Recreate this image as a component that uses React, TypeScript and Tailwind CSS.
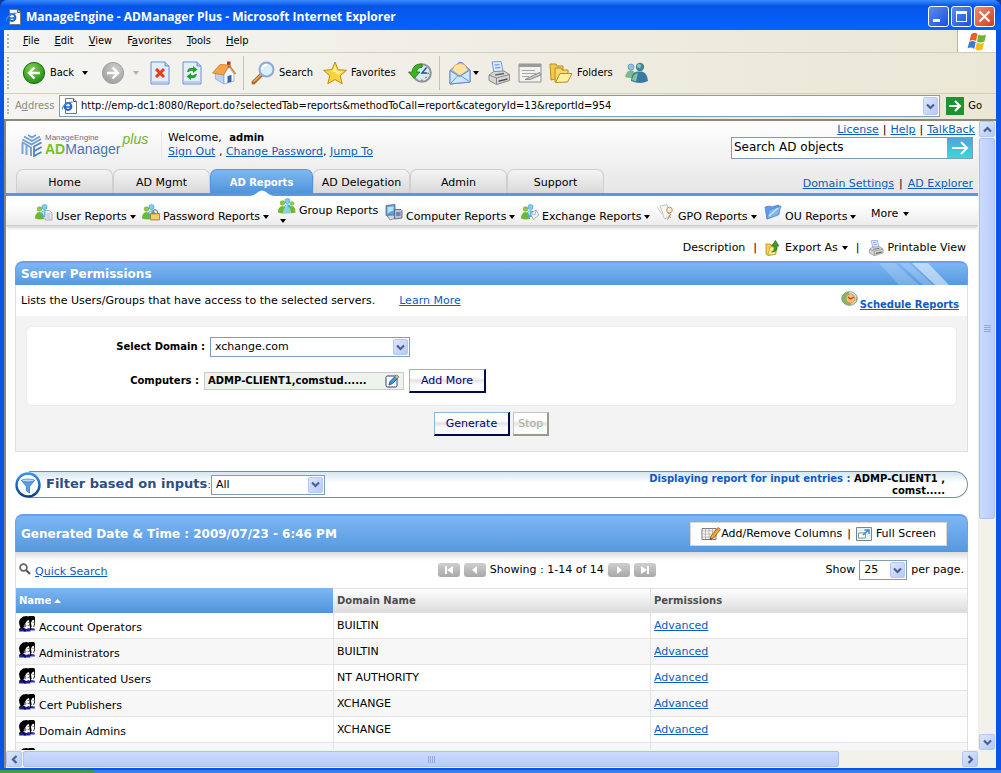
import { ReactNode, SVGProps } from "react";
import clsx from "clsx";

type IconProps = SVGProps<SVGSVGElement>;

/* ---------- window icons ---------- */

function IePageIcon(props: IconProps) {
  return (
    <svg viewBox="0 0 16 16" width="16" height="16" {...props}>
      <path d="M3.5.5h8l3 3v12h-11z" fill="#fff" stroke="#777" />
      <path d="M11.5.5v3h3" fill="#ddd" stroke="#555" />
      <circle cx="6" cy="8.5" r="3.4" fill="none" stroke="#1c63c9" strokeWidth="2" />
      <path d="M3 9h6.5" stroke="#1c63c9" strokeWidth="1.6" />
      <path d="M0 12C-.5 9 7 3 10.500 4.500" fill="none" stroke="#3d8be8" strokeWidth="1.200" />
    </svg>
  );
}

function WindowsFlag() {
  return (
    <svg viewBox="0 0 20 19" width="20" height="19">
      <path d="M4 2.500Q7-.5 10.500 2L9 9Q6 7 2.500 9z" fill="#ee5b24" />
      <path d="M11.500 2.500Q15 4.500 19 2.500L17.500 9.500Q13.500 11.500 10 9.500z" fill="#70b32c" />
      <path d="M2.200 10Q5.500 8 8.700 10L7.200 17Q4 14.500.5 16.500z" fill="#3a7bd8" />
      <path d="M9.700 10.500Q13.500 12.500 17 10.500L15.500 17.500Q12 19.500 8.200 17.500z" fill="#f7bd1c" />
    </svg>
  );
}

function ArrowBall({ green, flip }: { green?: boolean; flip?: boolean }) {
  return (
    <svg viewBox="0 0 24 24" width="24" height="24" className={clsx("shrink-0", flip && "-scale-x-100")}>
      <defs>
        <radialGradient id={green ? "ballGreen" : "ballGray"} cx="40%" cy="30%" r="75%">
          <stop offset="0" stopColor={green ? "#7fd24c" : "#cfcfcd"} />
          <stop offset="1" stopColor={green ? "#1d8a12" : "#9d9d9b"} />
        </radialGradient>
      </defs>
      <circle cx="12" cy="12" r="10.600" fill={green ? "url(#ballGreen)" : "url(#ballGray)"} stroke={green ? "#187010" : "#a2a2a0"} />
      <path d="M12.500 6.500L7 12l5.500 5.500M7.500 12H18" fill="none" stroke="#fff" strokeWidth="2.400" />
    </svg>
  );
}

function BluePage({ children }: { children: ReactNode }) {
  return (
    <svg viewBox="0 0 20 24" width="20" height="24" className="shrink-0">
      <path d="M1 1h14l4 4v18H1z" fill="#e3edfb" stroke="#6f8fd0" />
      <path d="M15 1v4h4" fill="#b9cdf2" stroke="#6f8fd0" />
      <path d="M2 20h16v2H2z" fill="#b9cdf2" />
      {children}
    </svg>
  );
}

function HomeIcon() {
  return (
    <svg viewBox="0 0 24 24" width="24" height="24">
      <path d="M3.500 12L7 10l5 3v10l-8.500-5z" fill="#bcd2f3" stroke="#8aa2cc" strokeWidth=".7" />
      <path d="M12 13l5-7 5 7v7l-10 3z" fill="#f6f9ff" stroke="#8aa2cc" strokeWidth=".7" />
      <path d="M15 .5h3.500v6H15z" fill="#b8341f" />
      <path d="M.5 12L8 3.500l9 .5-5.500 10z" fill="#f5a548" stroke="#cf6f1c" strokeWidth=".7" />
      <path d="M17 4l6.500 9" fill="none" stroke="#dd8433" strokeWidth="1.600" />
      <path d="M15.500 15l4-1v6.800l-4 1.200z" fill="#3d62ac" />
    </svg>
  );
}

function SearchGlass() {
  return (
    <svg viewBox="0 0 24 24" width="24" height="24">
      <path d="M10 14l-7.500 7.500" stroke="#b06a2c" strokeWidth="4" strokeLinecap="round" />
      <path d="M10 13.500l-7 7" stroke="#f0a861" strokeWidth="1.500" strokeLinecap="round" />
      <circle cx="15.500" cy="8.500" r="7" fill="#d7efff" stroke="#8fa9d6" strokeWidth="2" />
      <path d="M11 8a5 5 0 0 1 5-4" fill="none" stroke="#fff" strokeWidth="2" />
    </svg>
  );
}

function StarIcon() {
  return (
    <svg viewBox="0 0 24 24" width="24" height="24">
      <path d="M12 1l3.200 7.700 8.300.6-6.300 5.400 2 8.100L12 18.500l-7.200 4.300 2-8.100L.5 9.300l8.300-.6z" fill="#fbd43a" stroke="#bf8c13" />
      <path d="M12 4l2 6 6 .5-5 3.500-3-3-5.500-1 3.500-.5z" fill="#fff09a" />
    </svg>
  );
}

function HistoryIcon() {
  return (
    <svg viewBox="0 0 24 24" width="24" height="24">
      <circle cx="14" cy="12" r="8.800" fill="#d9e8f6" stroke="#8d959c" strokeWidth="2" />
      <path d="M18.500 6.500L14 12h5" fill="none" stroke="#24507e" strokeWidth="1.400" />
      <path d="M14 4.500v1.500M21 12.500h-1.500M14 20v-1.500M18.500 17l-1-1" stroke="#e0522c" strokeWidth="1.400" />
      <path d="M14 3C8 2.500 4.500 6 4 11H.5l5.700 6.500L12 11H8.500c.5-3 2.500-4.500 5.500-4.700z" fill="#3eb31f" stroke="#1f7d10" strokeWidth=".8" />
    </svg>
  );
}

function MailIcon() {
  return (
    <svg viewBox="0 0 22 24" width="22" height="24">
      <path d="M1 9.500L10 1.500h3l8 7.500v12L1 23z" fill="#9fc0f3" stroke="#6e82cc" />
      <path d="M3 9l3-5q6-3 10 0l3 5-8 6z" fill="#fce3a2" stroke="#d29f55" strokeWidth=".7" />
      <path d="M1 9.500l9.500 6L21 9v12L1 23z" fill="#c9e9fc" stroke="#6e82cc" />
      <path d="M1.500 22.500l7.500-8 3 .5 8.500 5.500" fill="none" stroke="#6e92d8" />
    </svg>
  );
}

function PrinterIcon({ small }: { small?: boolean }) {
  return (
    <svg viewBox="0 0 24 24" width={small ? 16 : 24} height={small ? 16 : 24} className="shrink-0">
      <path d="M5 1l9-.5 2.500 12-9 1z" fill="#e3efff" stroke="#7795cf" />
      <path d="M7.500 4l5-.5M8 7l5.500-.5" stroke="#7fa4e6" strokeWidth="1.300" />
      <path d="M2 14l5-3.500L17 10l5.500 3.500v6l-13 4L2 19.500z" fill="#d6d6d6" stroke="#8a8a8a" />
      <path d="M2 14l7.500 3 13-3.500M9.500 17v6.500" fill="none" stroke="#8a8a8a" />
      <path d="M11.500 19.500l9-2.300v1.500l-9 2.300z" fill="#4c4c4c" />
      <path d="M8 14l9-1.500" stroke="#666" strokeWidth="1.300" />
    </svg>
  );
}

function EditPageIcon() {
  return (
    <svg viewBox="0 0 24 20" width="24" height="20">
      <path d="M1 1h22v18H1z" fill="#f1f1ed" stroke="#939393" />
      <path d="M1 1h22v3H1z" fill="#9b9b9b" />
      <path d="M4 7.500h13M4 10.500h14M4 13.500h7" stroke="#a5a5a3" />
      <path d="M7 16.500l4-2 10.500-5 1.500 2.500-11 4.500z" fill="#c6c6c4" stroke="#848484" strokeWidth=".9" />
    </svg>
  );
}

function FoldersIcon() {
  return (
    <svg viewBox="0 0 24 22" width="24" height="22">
      <path d="M1 2h6l1 2h6v11L2 18z" fill="#f5c84c" stroke="#b98d1f" />
      <path d="M6 6h6l1 2h6v9L6 20z" fill="#f9d867" stroke="#b98d1f" />
      <path d="M6.500 20.500l4.500-9h12l-4.500 8.500z" fill="#fdf0a2" stroke="#b98d1f" />
    </svg>
  );
}

function BuddiesIcon() {
  return (
    <svg viewBox="0 0 24 22" width="24" height="22">
      <circle cx="7" cy="5" r="3" fill="#8ec3e8" stroke="#4d86a8" strokeWidth=".6" />
      <path d="M1 15q1-6 6-7 5 1 5 7-5 2-11 0z" fill="#7dbb86" />
      <circle cx="16" cy="5" r="4.200" fill="#3f8a91" />
      <circle cx="15" cy="4" r="2" fill="#8bc7cc" />
      <path d="M7 19Q7 11 13 9.500h5Q23.500 11 24 19q-8 4-17 0z" fill="#397aa5" />
      <path d="M8 18q1-6 6-7l-2 8.500z" fill="#85c0a2" />
    </svg>
  );
}

/* ---------- page icons ---------- */

function Logo() {
  return (
    <div className="flex w-[134px] shrink-0 items-end">
      <svg viewBox="0 0 22 24" width="22" height="24" className="shrink-0">
        <path d="M1.500 21V9.500M1 9l9 5.500V23M5.500 22V12" fill="none" stroke="#7aa3d6" strokeWidth="2" />
        <path d="M1.500 6.500l9 5L20 6M3 3.500l8 4.500 8-4.500M7 2l4 2.500L15 2" fill="none" stroke="#6b9bd3" strokeWidth="1.600" />
        <path d="M20.500 9.500l-7.500 4v9.500l7.500-4M20.500 14l-7 4" fill="none" stroke="#4f83c4" strokeWidth="1.800" />
      </svg>
      <div className="ml-[2px] font-['Liberation_Sans'] leading-none">
        <div className="text-[8px] leading-[9px] text-gray-500">ManageEngine</div>
        <div className="flex text-[14px] leading-[15px] text-[#4677b5]">
          <b className="text-[#7cc11c]">AD</b>Manager
        </div>
      </div>
      <span className="ml-[2px] self-start font-['Liberation_Sans'] text-[14px] italic leading-3 text-[#6fb51e]">plus</span>
    </div>
  );
}

function People({ children }: { children?: ReactNode }) {
  return (
    <svg viewBox="0 0 18 17" width="18" height="17" className="shrink-0">
      <circle cx="4.500" cy="5" r="2.300" fill="#8ccc3a" stroke="#5a9a1d" strokeWidth=".5" />
      <path d="M0 14.500Q0 8.500 4.500 8q4 .5 4.500 7-5 1-9-.5z" fill="#6fb92e" />
      <circle cx="9.500" cy="3" r="2.600" fill="#7bd0ee" stroke="#2e93bb" strokeWidth=".5" />
      <path d="M5.500 12Q5.500 7 9.500 6.200 14 7 14 12q-4 2-8.500 0z" fill="#3fb0dc" />
      <path d="M7 8.500q1-1.200 2.500-1.500l-.5 5z" fill="#b9ecf8" />
      {children}
    </svg>
  );
}

const userIcon = (
  <People>
    <path d="M10 6.500h4.500L17 9v7h-7z" fill="#eef0f5" stroke="#8b93a3" strokeWidth=".7" />
    <path d="M11.500 10h4M11.500 12h4M11.500 14h4" stroke="#9aa3b7" strokeWidth=".7" />
  </People>
);

const passwordIcon = (
  <People>
    <path d="M10.500 10V7.500q2.500-3.500 5 0V10" fill="none" stroke="#8d8d8d" strokeWidth="1.300" />
    <path d="M8.500 9.500h9v6.500h-9z" fill="#e9b83c" stroke="#9c741c" strokeWidth=".7" />
    <path d="M9 12h8M9 14h8" stroke="#fbe79b" />
  </People>
);

const groupIcon = (
  <People>
    <circle cx="14" cy="5.500" r="2.200" fill="#8ccc3a" />
    <path d="M9.500 14.500q0-6 4.500-6.500 3.500.5 3.500 6.500-4 1.500-8 0z" fill="#6fb92e" />
    <path d="M5 15q0-6 4-6.500 4 .5 4 6.500-4 1-8 0z" fill="#8ad0d6" />
  </People>
);

const computerIcon = (
  <svg viewBox="0 0 18 17" width="18" height="17" className="shrink-0">
    <path d="M1 1.500l9-1v10l-9 1z" fill="#5ea0dd" stroke="#5d6676" strokeWidth=".8" />
    <path d="M2.500 3l6-.7v4l-6 3z" fill="#b6e2fb" />
    <path d="M2 12l6-1 3 3-6 2z" fill="#cfd3db" stroke="#71798a" strokeWidth=".7" />
    <path d="M9.500 5.500H16l1 1V14l-7.500 1z" fill="#bac3da" stroke="#4c5975" strokeWidth=".8" />
    <path d="M11 8h4.500v4H11z" fill="#7284b5" />
  </svg>
);

const exchangeIcon = (
  <People>
    <path d="M9.500 9.500L15 6l3 5-5.500 4.500z" fill="#f0f3fa" stroke="#8f9ab4" strokeWidth=".7" />
    <path d="M9.500 9.500l4.500 1.200L15 6" fill="none" stroke="#8f9ab4" strokeWidth=".7" />
  </People>
);

const gpoIcon = (
  <svg viewBox="0 0 18 17" width="18" height="17" className="shrink-0">
    <path d="M3 2l7-1.500 4 10L8 15Q6 14 6 10z" fill="#f6f6f6" stroke="#b9b9b9" strokeWidth=".8" />
    <path d="M0 3l5 7" stroke="#bbb" strokeWidth=".8" />
    <circle cx="12.500" cy="6" r="2.800" fill="#f8edda" stroke="#b58a45" strokeWidth=".9" />
    <path d="M10.500 8.500l3 2-3 5M12 12.500l2 1" fill="none" stroke="#b58a45" />
  </svg>
);

const ouIcon = (
  <svg viewBox="0 0 18 17" width="18" height="17" className="shrink-0">
    <path d="M1 3l5-1 1 1 8-2v9L3 15z" fill="#5f9ee8" stroke="#3b76c4" strokeWidth=".7" />
    <path d="M3 15L5 6l12-4-2.500 9z" fill="#7fb4f3" stroke="#4b87d4" strokeWidth=".7" />
    <path d="M5 12L14 4" stroke="#cfe4ff" strokeWidth="1.500" />
  </svg>
);

function ExportIcon() {
  return (
    <svg viewBox="0 0 16 16" width="16" height="16" className="shrink-0">
      <path d="M1 4h4l1 1h5v9l-8 1.500L1 14z" fill="#f3cf4d" stroke="#b98e1d" strokeWidth=".8" />
      <path d="M3 15l2-8h7l-2 7.500z" fill="#fdee9d" stroke="#b98e1d" strokeWidth=".6" />
      <path d="M6.500 12q4-2 2.500-6H6.500l4-5.500L14 6h-2q1 6-5.500 6z" fill="#37a321" stroke="#1c6d10" strokeWidth=".6" />
    </svg>
  );
}

function ScheduleIcon() {
  return (
    <svg viewBox="0 0 17 16" width="17" height="16" className="shrink-0">
      <ellipse cx="8.500" cy="7.500" rx="7.800" ry="6.800" fill="#7dbb62" stroke="#8a9b82" />
      <path d="M8 1q6 0 7.500 5l-1 5-4 3z" fill="#d5e2ea" />
      <circle cx="9.500" cy="7.500" r="4.500" fill="#f8c173" stroke="#d58c45" strokeWidth=".8" />
      <path d="M7 6l2.500 2 3.500-2" fill="none" stroke="#c23c17" strokeWidth="1.200" />
    </svg>
  );
}

function PencilBoxIcon() {
  return (
    <svg viewBox="0 0 15 14" width="15" height="14" className="shrink-0">
      <rect x="1" y="2" width="11" height="11" rx="1.500" fill="#fff" stroke="#2c3f66" />
      <path d="M4 11l1-3.500L11.500 1 14 3 7.500 9.500z" fill="#3d9ae8" stroke="#154a8d" strokeWidth=".9" />
      <path d="M11.500 1L14 3l-1.500 1.500L10 2.500z" fill="#e9b96c" />
    </svg>
  );
}

function FilterIcon() {
  return (
    <svg viewBox="0 0 26 26" width="26" height="26" className="relative z-10 shrink-0">
      <defs>
        <linearGradient id="ring" x1="0" y1="0" x2="0" y2="1">
          <stop offset="0" stopColor="#2f93ee" />
          <stop offset="1" stopColor="#0a3f86" />
        </linearGradient>
      </defs>
      <circle cx="13" cy="13" r="11.500" fill="#fff" stroke="url(#ring)" strokeWidth="2.400" />
      <path d="M6.500 8.500h13l-5 6V21l-3-2v-4.500z" fill="#5c9fe6" stroke="#3573bb" strokeWidth=".8" />
      <ellipse cx="13" cy="8.500" rx="6.500" ry="1.400" fill="#bcdcff" stroke="#3573bb" strokeWidth=".7" />
    </svg>
  );
}

function ColumnsIcon() {
  return (
    <svg viewBox="0 0 20 14" width="20" height="14" className="shrink-0">
      <path d="M1 1.500h14v11H1z" fill="#fff" stroke="#777" />
      <path d="M1 4h14M1 7h14M1 10h14M4.500 1.500v11M8 1.500v11M11.500 1.500v11" stroke="#aaa" strokeWidth=".8" />
      <path d="M9 13l1-4 7-8.500 2.500 2-7 8.500z" fill="#f3a72d" stroke="#8e5411" strokeWidth=".8" />
      <path d="M9 13l.5-2 1.500 1z" fill="#333" />
    </svg>
  );
}

function FullScreenIcon() {
  return (
    <svg viewBox="0 0 16 14" width="16" height="14" className="shrink-0">
      <path d="M.5.500h15v13H.500z" fill="#e9f2f8" stroke="#6f8797" />
      <path d="M2.500 6h7v5h-7z" fill="#fff" stroke="#78a27a" />
      <path d="M7 8l5-4.500M8.500 3H13v4" fill="none" stroke="#3888d8" strokeWidth="1.500" />
    </svg>
  );
}

function MagnifierIcon() {
  return (
    <svg viewBox="0 0 12 12" width="12" height="12">
      <circle cx="4.500" cy="4.500" r="3.400" fill="#fff" stroke="#666" strokeWidth="1.800" />
      <path d="M7 7l4 4" stroke="#555" strokeWidth="2.200" />
    </svg>
  );
}

function GroupRowIcon() {
  return (
    <svg viewBox="0 0 16 16" width="16" height="16" className="shrink-0">
      <path d="M8 2l2-2h5l1 1.500V8l-1 3h-4z" fill="#000" />
      <path d="M13 4.500l2-1 .3 4-1 3.500h-1.600l-.7-4z" fill="#fff" />
      <path d="M0 6l1-3 3-2.500L8 0l3 1.500V4L8 5l-1.500 4L4 12H1.500L.5 9z" fill="#000" />
      <path d="M8 5l2-1 .5 3.500-1 3.500L8 11.500 6 10l.5-3z" fill="#fff" />
      <path d="M5.500 8.500l1.500.5-.5 1.500-1.500-.5zM8.500 6.500H10M13.500 6.500h1M8.500 9.500h1.500" fill="#fff" stroke="#333" strokeWidth=".7" />
      <path d="M0 15.500l.5-2L5 11.500 7 13l3-1 1.500 1.500v2z" fill="#1b1ba6" />
      <path d="M0 13.500l4-2M4 12.500l2.500 3M11.500 11v3" fill="none" stroke="#000" strokeWidth="1.200" />
      <path d="M12 14.500V12l3.500.5.5 2z" fill="#2a2ac8" />
    </svg>
  );
}

/* ---------- shared bits ---------- */

function Caret({ className }: { className?: string }) {
  return (
    <svg viewBox="0 0 6 4" width="6" height="4" className={clsx("shrink-0", className)} fill="currentColor">
      <path d="M0 0h6L3 4z" />
    </svg>
  );
}

function Chevron({ className }: { className?: string }) {
  return (
    <svg viewBox="0 0 9 9" width="9" height="9" className={className} fill="none" stroke="#4d6185" strokeWidth="2.200">
      <path d="M1 2.500l3.500 3.500L8 2.500" />
    </svg>
  );
}

const xpButton = "flex items-center justify-center rounded-[2px] border border-[#b4c8f6] bg-gradient-to-br from-[#dce6fe] to-[#b5c9fb]";
const link = "text-[#0b5cc4] underline";

function Select({ id, label, options, className }: { id: string; label: string; options: string[]; className: string }) {
  return (
    <div className={clsx("relative h-5 shrink-0 text-[11px]", className)}>
      <select id={id} aria-label={label} className="h-full w-full appearance-none border border-[#7f9db9] bg-white pl-1 leading-4 text-black">
        {options.map((o) => (
          <option key={o}>{o}</option>
        ))}
      </select>
      <span className={clsx("pointer-events-none absolute inset-y-[2px] right-[2px] w-[15px]", xpButton)}>
        <Chevron />
      </span>
    </div>
  );
}

function PushButton({ children, disabled }: { children: ReactNode; disabled?: boolean }) {
  return (
    <button
      disabled={disabled}
      className={clsx(
        "h-6 border border-r-2 border-b-2 bg-gradient-to-b from-white from-35% via-[#e4e4e4] via-50% to-[#fbfbfb] to-70% text-[11px] leading-4",
        disabled
          ? "border-[#c8c7bf] border-r-[#9c9a8f] border-b-[#9c9a8f] px-1 text-[#aca899]"
          : "border-[#8fb4dc] border-r-[#000a4d] border-b-[#000a4d] px-[11px] text-[#00007b]",
      )}
    >
      {children}
    </button>
  );
}

/* ---------- browser chrome ---------- */

function TitleBar() {
  const box = "flex h-[21px] w-[21px] items-center justify-center rounded-[3px] border border-white";
  return (
    <header className="flex h-[30px] shrink-0 items-center bg-gradient-to-b from-[#3a8bff] via-[#0455e6] via-20% to-[#0663ff] px-[6px] pt-[3px]">
      <IePageIcon />
      <h1 className="ml-1 flex-1 font-['Open_Sans'] text-[12px] font-bold text-white">
        ManageEngine - ADManager Plus - Microsoft Internet Explorer
      </h1>
      <div className="flex gap-[2px]">
        <button aria-label="Minimize" className={clsx(box, "bg-gradient-to-br from-[#5a8cf0] to-[#1d4fd8]")}>
          <span className="mt-2 mr-1 h-[3px] w-[7px] bg-white" />
        </button>
        <button aria-label="Maximize" className={clsx(box, "bg-gradient-to-br from-[#5a8cf0] to-[#1d4fd8]")}>
          <span className="h-[11px] w-[11px] border border-t-[3px] border-white" />
        </button>
        <button aria-label="Close" className={clsx(box, "bg-gradient-to-br from-[#ee8d6c] to-[#cf3a12]")}>
          <svg viewBox="0 0 13 13" width="13" height="13" stroke="#fff" strokeWidth="2.200">
            <path d="M1.500 1.500l10 10M11.500 1.500l-10 10" />
          </svg>
        </button>
      </div>
    </header>
  );
}

const grip = "ml-[3px] w-[2px] shrink-0 border-l-2 border-dotted border-[#b8b5a8]";
const menus: [string, string, string][] = [
  ["", "F", "ile"],
  ["", "E", "dit"],
  ["", "V", "iew"],
  ["F", "a", "vorites"],
  ["", "T", "ools"],
  ["", "H", "elp"],
];

function MenuBar() {
  return (
    <nav className="flex h-[23px] shrink-0 items-stretch border-b border-[#d3cfc0]">
      <span className={clsx(grip, "my-1")} />
      <div className="ml-[14px] flex flex-1 items-center gap-[15px] pt-px">
        {menus.map(([pre, key, rest]) => (
          <button key={key + rest}>
            {pre}
            <u>{key}</u>
            {rest}
          </button>
        ))}
      </div>
      <div className="flex w-[39px] items-center justify-center border-l border-[#b8b5a8] bg-white">
        <WindowsFlag />
      </div>
    </nav>
  );
}

function ToolButton({ icon, label, className }: { icon: ReactNode; label: string; className: string }) {
  return (
    <button className={clsx("flex shrink-0 items-center gap-1", className)}>
      {icon}
      {label}
    </button>
  );
}

function ToolBar() {
  const sep = "mx-[7px] h-[34px] w-px shrink-0 bg-[#c9c5b4]";
  return (
    <div className="flex h-[41px] shrink-0 items-center border-b border-[#d8ceb5]">
      <span className={clsx(grip, "h-8")} />
      <ToolButton icon={<ArrowBall green />} label="Back" className="ml-[13px] w-[60px]" />
      <Caret />
      <button aria-label="Forward" className="ml-[13px]">
        <ArrowBall flip />
      </button>
      <Caret className="ml-2 text-[#b5b2a5]" />
      <button aria-label="Stop" className="ml-[11px]">
        <BluePage>
          <path d="M6 8l8 8M14 8l-8 8" stroke="#ee3a12" strokeWidth="3" />
        </BluePage>
      </button>
      <button aria-label="Refresh" className="ml-3">
        <BluePage>
          <path d="M5 11q1-5 6-4V5l4.500 3.500L11 12v-2q-3-1-4 1zM15 13q-1 5-6 4v2l-4.500-3.500L9 12v2q3 1 4-1z" fill="#23a32b" />
        </BluePage>
      </button>
      <button aria-label="Home" className="ml-[10px]">
        <HomeIcon />
      </button>
      <span className={sep} />
      <ToolButton icon={<SearchGlass />} label="Search" className="w-[72px]" />
      <ToolButton icon={<StarIcon />} label="Favorites" className="w-[85px]" />
      <button aria-label="History">
        <HistoryIcon />
      </button>
      <span className={sep} />
      <button aria-label="Mail" className="ml-[2px] flex items-center gap-[2px]">
        <MailIcon />
        <Caret />
      </button>
      <button aria-label="Print" className="ml-2">
        <PrinterIcon />
      </button>
      <button aria-label="Edit" className="ml-[7px]">
        <EditPageIcon />
      </button>
      <ToolButton icon={<FoldersIcon />} label="Folders" className="ml-[7px] w-[75px]" />
      <button aria-label="Messenger">
        <BuddiesIcon />
      </button>
    </div>
  );
}

function AddressBar() {
  return (
    <form className="flex h-[27px] shrink-0 items-center border-b-2 border-[#8b887a] pr-[14px] pb-px">
      <span className={clsx(grip, "h-4")} />
      <label htmlFor="address" className="ml-[6px] w-[44px] shrink-0 text-[#8d8a7d]">
        A<u>d</u>dress
      </label>
      <div className="flex h-[22px] flex-1 items-center border border-[#7f9db9] bg-white pl-[2px]">
        <IePageIcon />
        <input
          id="address"
          className="ml-[3px] min-w-0 flex-1 outline-none"
          defaultValue="http://emp-dc1:8080/Report.do?selectedTab=reports&methodToCall=report&categoryId=13&reportId=954"
        />
        <button type="button" aria-label="Show addresses" className={clsx("mr-px h-[18px] w-[15px]", xpButton)}>
          <Chevron />
        </button>
      </div>
      <button type="button" className="ml-[6px] flex shrink-0 items-center gap-1">
        <svg viewBox="0 0 18 18" width="18" height="18">
          <path d="M0 0h18v18H0z" fill="#1f9230" />
          <path d="M3 9h11M9 4l5 5-5 5" fill="none" stroke="#fff" strokeWidth="2.200" />
        </svg>
        Go
      </button>
    </form>
  );
}

/* ---------- page ---------- */

const tabs = ["Home", "AD Mgmt", "AD Reports", "AD Delegation", "Admin", "Support"];

function PageHeader() {
  return (
    <header className="border-b-[3px] border-[#5797dd] bg-gradient-to-b from-white to-[#e6e6e6] pr-[5px] pl-[10px]">
      <div className="flex h-12 justify-between">
        <div className="flex items-center pl-[5px]">
          <Logo />
          <div className="ml-[6px] border-l border-gray-200 pl-[6px] leading-[14px]">
            <div>
              Welcome, <b className="ml-1 text-[10px]">admin</b>
            </div>
            <div>
              <a href="#signout" className={link}>Sign Out</a> , <a href="#password" className={link}>Change Password</a>,{" "}
              <a href="#jump" className={link}>Jump To</a>
            </div>
          </div>
        </div>
        <div className="flex flex-col items-end">
          <div className="-mr-[2px] flex h-4 items-center gap-1 pt-px">
            <a href="#license" className={link}>License</a> | <a href="#help" className={link}>Help</a> |{" "}
            <a href="#talkback" className={link}>TalkBack</a>
          </div>
          <form className="flex h-[22px] w-[242px] border border-[#7f9db9] bg-white">
            <input aria-label="Search AD objects" defaultValue="Search AD objects" className="min-w-0 flex-1 px-[2px] pb-[3px] text-[12px] outline-none" />
            <button type="button" aria-label="Search" className="flex w-[25px] items-center justify-center bg-gradient-to-b from-[#4aa7dc] to-[#3cd6dc]">
              <svg viewBox="0 0 18 14" width="18" height="14" fill="none" stroke="#fff" strokeWidth="2">
                <path d="M1 7h15M10 1l6 6-6 6" />
              </svg>
            </button>
          </form>
        </div>
      </div>
      <div className="flex items-end justify-between">
        <div className="flex h-6 items-stretch">
          {tabs.map((t) => (
            <button
              key={t}
              className={clsx(
                "relative shrink-0 rounded-t-[7px] border border-b-0 pt-[2px] whitespace-nowrap",
                t === "AD Reports"
                  ? "w-[103px] border-[#5b93e0] bg-gradient-to-b from-[#80b7f2] to-[#4f94db] text-[10px] font-bold text-white"
                  : "w-[97px] border-[#cfcfcf] bg-gradient-to-b from-[#f4f4f4] to-[#d9d9d9]",
              )}
            >
              {t}
              {t === "AD Reports" && (
                <svg viewBox="0 0 24 6" width="24" height="6" className="absolute -bottom-[3px] left-[39px]">
                  <path d="M0 6Q5 5 8 2q4-3 8 0 3 3 8 4z" fill="#fff" />
                </svg>
              )}
            </button>
          ))}
        </div>
        <div className="flex items-center gap-[5px] pb-[2px]">
          <a href="#domain" className={link}>Domain Settings</a> | <a href="#explorer" className={link}>AD Explorer</a>
        </div>
      </div>
    </header>
  );
}

const reports: { label: string; icon: ReactNode; width: string; stacked?: boolean }[] = [
  { label: "User Reports", icon: userIcon, width: "w-[107px]" },
  { label: "Password Reports", icon: passwordIcon, width: "w-[136px]" },
  { label: "Group Reports", icon: groupIcon, width: "w-[107px]", stacked: true },
  { label: "Computer Reports", icon: computerIcon, width: "w-[136px]" },
  { label: "Exchange Reports", icon: exchangeIcon, width: "w-[136px]" },
  { label: "GPO Reports", icon: gpoIcon, width: "w-[107px]" },
  { label: "OU Reports", icon: ouIcon, width: "w-[107px]" },
];

function ReportNav() {
  return (
    <nav className="flex h-[30px] shrink-0 items-start border-b border-[#cfcfcf] bg-gradient-to-b from-white from-30% to-[#ececec] pl-[29px] shadow-[0_2px_3px_#d4d4d4]">
      {reports.map((r) => (
        <button key={r.label} className={clsx("shrink-0 text-left whitespace-nowrap", r.width, r.stacked ? "pt-[2px]" : "pt-2")}>
          <span className="flex items-start gap-[3px]">
            {r.icon}
            <span className="pt-[5px] leading-4">{r.label}</span>
            {!r.stacked && <Caret className="mt-[11px]" />}
          </span>
          {r.stacked && <Caret className="ml-[2px]" />}
        </button>
      ))}
      <button className="flex shrink-0 items-center gap-[5px] pt-[10px] leading-4">
        More <Caret />
      </button>
    </nav>
  );
}

const panelHead = "bg-gradient-to-b from-[#7db7f5] to-[#5698de] rounded-t-lg border-t-2 border-x border-[#6f9fec] text-[12px] font-bold text-white";

function CriteriaPanel() {
  return (
    <section>
      <div className={clsx(panelHead, "flex h-6 items-center justify-between overflow-hidden pl-[5px]")}>
        <h2>Server Permissions</h2>
        <svg viewBox="0 0 100 22" width="100" height="22" className="shrink-0">
          <path d="M12 0h16l24 22H32z" fill="#fff" opacity=".2" />
          <path d="M32 0h10l24 22H56z" fill="#fff" opacity=".2" />
          <path d="M45 0h16l21 22H68z" fill="#fff" opacity=".5" />
        </svg>
      </div>
      <div className="border-x border-b border-[#dedede] bg-[#f3f3f3]">
        <div className="flex h-[31px] justify-between bg-white pr-2 pl-[5px] leading-4">
          <p className="pt-2">
            Lists the Users/Groups that have access to the selected servers.
            <a href="#more" className={clsx(link, "ml-6")}>Learn More</a>
          </p>
          <a href="#schedule" className="flex items-start gap-[2px] pt-[6px] text-[10px] font-bold text-[#0b5cc4]">
            <ScheduleIcon />
            <span className="pt-[6px] underline">Schedule Reports</span>
          </a>
        </div>
        <div className="mx-[10px] mt-[10px] flex h-[80px] flex-col gap-3 rounded-md border border-[#ececf2] bg-white pt-[10px]">
          <div className="flex h-5 items-center">
            <label htmlFor="domain" className="w-[178px] text-right text-[10px] font-bold">Select Domain :</label>
            <Select id="domain" label="Select Domain" options={["xchange.com"]} className="ml-[5px] w-[200px]" />
          </div>
          <div className="flex h-6 items-center">
            <label htmlFor="computers" className="w-[172px] text-right text-[10px] font-bold">Computers :</label>
            <div className="mr-[5px] ml-[5px] flex h-[18px] w-[200px] items-center border border-[#c9cbc6] bg-[#eef2ec] pr-[3px]">
              <input id="computers" defaultValue="ADMP-CLIENT1,comstud......" className="min-w-0 flex-1 pl-[3px] text-[10px] font-bold outline-none" />
              <button aria-label="Edit computers">
                <PencilBoxIcon />
              </button>
            </div>
            <PushButton>Add More</PushButton>
          </div>
        </div>
        <div className="flex justify-center gap-[3px] pt-[6px] pb-[15px]">
          <PushButton>Generate</PushButton>
          <PushButton disabled>Stop</PushButton>
        </div>
      </div>
    </section>
  );
}

function FilterBar() {
  return (
    <section className="mt-[19px] flex h-[27px] items-center">
      <FilterIcon />
      <div className="-ml-3 flex h-full flex-1 items-center justify-between rounded-r-full border border-l-0 border-[#7a8ca3] bg-gradient-to-b from-[#d7e5f2] to-white to-45% pr-[22px] pl-[17px]">
        <div className="flex items-center">
          <label htmlFor="filter" className="text-[#2d4f86]">
            <b className="text-[13px]">Filter based on inputs</b>:
          </label>
          <Select id="filter" label="Filter based on inputs" options={["All"]} className="w-[114px]" />
        </div>
        <p className="w-[300px] text-right text-[10px] leading-3 font-bold">
          <span className="text-[#0b5cc4]">Displaying report for input entries :</span> ADMP-CLIENT1 , comst.....
        </p>
      </div>
    </section>
  );
}

function PagerButton({ label, d }: { label: string; d: string }) {
  return (
    <button aria-label={label} className="flex h-[14px] w-[22px] items-center justify-center rounded-[3px] bg-gradient-to-b from-[#cfcfcf] to-[#a8a8a8]">
      <svg viewBox="0 0 10 8" width="10" height="8" fill="#fff">
        <path d={d} />
      </svg>
    </button>
  );
}

const rows = [
  ["Account Operators", "BUILTIN"],
  ["Administrators", "BUILTIN"],
  ["Authenticated Users", "NT AUTHORITY"],
  ["Cert Publishers", "XCHANGE"],
  ["Domain Admins", "XCHANGE"],
  ["", ""],
];

function ResultPanel() {
  const th = "h-[25px] border-[#e2e2e2] text-left text-[10px] font-bold";
  return (
    <section className="mt-4">
      <div className={clsx(panelHead, "flex h-[38px] items-center justify-between pr-5 pl-[5px]")}>
        <h2>Generated Date &amp; Time : 2009/07/23 - 6:46 PM</h2>
        <div className="flex h-6 items-center gap-[5px] border border-[#d5d5d5] bg-white px-[10px] text-[11px] font-normal text-black">
          <button className="flex items-center">
            <ColumnsIcon />
            Add/Remove Columns
          </button>
          |
          <button className="flex items-center gap-1">
            <FullScreenIcon />
            Full Screen
          </button>
        </div>
      </div>
      <div className="border-x border-[#dedede]">
        <div className="grid h-9 grid-cols-[44%_auto_1fr] items-center bg-gradient-to-b from-[#dcdcdc] to-white to-25% px-[3px]">
          <a href="#quick" className="flex gap-1 text-[#0b5cc4]">
            <MagnifierIcon />
            <span className="pt-[3px] leading-3 underline">Quick Search</span>
          </a>
          <div className="flex items-center gap-1 pl-[3px]">
            <PagerButton label="First page" d="M1 0h2v8H1zM9 0v8L3 4z" />
            <PagerButton label="Previous page" d="M7 0v8L2 4z" />
            <span>Showing : 1-14 of 14</span>
            <PagerButton label="Next page" d="M3 0v8l5-4z" />
            <PagerButton label="Last page" d="M7 0h2v8H7zM1 0v8l6-4z" />
          </div>
          <div className="flex items-center justify-end gap-1">
            <label htmlFor="perpage">Show</label>
            <Select id="perpage" label="Rows per page" options={["25"]} className="w-12" />
            per page.
          </div>
        </div>
        <table className="w-full table-fixed border-separate border-spacing-0">
          <thead>
            <tr>
              <th className={clsx(th, "bg-gradient-to-b from-[#7db7f5] to-[#5193da] pl-[3px] text-white")}>
                <span className="flex items-center gap-[3px]">
                  Name
                  <svg viewBox="0 0 7 4" width="7" height="4" fill="#fff">
                    <path d="M0 4h7L3.500 0z" />
                  </svg>
                </span>
              </th>
              <th className={clsx(th, "border-t border-b bg-gradient-to-b from-white to-[#dcdcdc] pl-1 text-[#4c4c4c]")}>Domain Name</th>
              <th className={clsx(th, "border-t border-b border-l bg-gradient-to-b from-white to-[#dcdcdc] pl-[3px] text-[#4c4c4c]")}>Permissions</th>
            </tr>
          </thead>
          <tbody>
            {rows.map(([name, domain], i) => (
              <tr key={i} className={clsx("h-[26px]", i % 2 ? "bg-[#f7f7f7]" : "bg-white")}>
                <td className="border-b border-[#e4e4e4] pl-[3px]">
                  <span className="flex items-start gap-1">
                    <GroupRowIcon />
                    <span className="pt-1 leading-4">{name}</span>
                  </span>
                </td>
                <td className="border-b border-l border-[#e4e4e4] pl-[3px]">{domain}</td>
                <td className="border-b border-l border-[#e4e4e4] pl-[3px]">
                  {name && <a href="#advanced" className={link}>Advanced</a>}
                </td>
              </tr>
            ))}
          </tbody>
        </table>
      </div>
    </section>
  );
}

function Page() {
  return (
    <main className="min-w-0 flex-1 overflow-hidden bg-white">
      <PageHeader />
      <ReportNav />
      <div className="pr-[10px] pl-[9px]">
        <div className="flex h-[35px] items-center justify-end gap-2 pt-[9px] pr-[2px]">
          <button>Description</button> |
          <button className="flex items-center gap-1">
            <ExportIcon /> Export As <Caret />
          </button>
          |
          <button className="flex items-center gap-1">
            <PrinterIcon small /> Printable View
          </button>
        </div>
        <CriteriaPanel />
        <FilterBar />
        <ResultPanel />
      </div>
    </main>
  );
}

function VerticalScroll() {
  return (
    <div className="flex w-[18px] shrink-0 flex-col gap-px bg-[#f3f2ea] px-px">
      <button aria-label="Scroll up" className={clsx("h-4 shrink-0", xpButton)}>
        <Chevron className="rotate-180" />
      </button>
      <div className="min-h-0 flex-1">
        <div className="flex h-[64%] flex-col items-center justify-center gap-px rounded-[2px] border border-[#a9c0f6] bg-gradient-to-r from-[#cbdafe] to-[#b9ccfb]">
          {[0, 1, 2, 3].map((n) => (
            <span key={n} className="h-px w-[7px] bg-[#8ea9e6]" />
          ))}
        </div>
      </div>
      <button aria-label="Scroll down" className={clsx("h-4 shrink-0", xpButton)}>
        <Chevron />
      </button>
    </div>
  );
}

function HorizontalScroll() {
  return (
    <div className="flex h-[18px] shrink-0 gap-px bg-[#f3f2ea] py-px pr-[18px]">
      <button aria-label="Scroll left" className={clsx("w-4 shrink-0", xpButton)}>
        <Chevron className="rotate-90" />
      </button>
      <div className="min-w-0 flex-1">
        <div className="flex h-full w-[87%] items-center justify-center gap-px rounded-[2px] border border-[#a9c0f6] bg-gradient-to-b from-[#cbdafe] to-[#b9ccfb]">
          {[0, 1, 2, 3].map((n) => (
            <span key={n} className="h-[7px] w-px bg-[#8ea9e6]" />
          ))}
        </div>
      </div>
      <button aria-label="Scroll right" className={clsx("w-4 shrink-0", xpButton)}>
        <Chevron className="-rotate-90" />
      </button>
    </div>
  );
}

export default function App() {
  return (
    <div className="flex h-screen flex-col overflow-hidden bg-[#0b3f9e]">
      <div className="flex min-h-0 flex-1 flex-col overflow-hidden rounded-t-lg bg-[#0855e8]">
        <TitleBar />
        <div className="mr-[5px] mb-[2px] ml-1 flex min-h-0 flex-1 flex-col">
          <div className="flex shrink-0 flex-col bg-gradient-to-r from-[#f4f4f2] to-[#ebe7d6] font-['DejaVu_Sans_Condensed'] text-[11px] text-black">
            <MenuBar />
            <ToolBar />
            <AddressBar />
          </div>
          <div className="flex min-h-0 flex-1 flex-col border-l-2 border-[#8b887a] bg-white font-['DejaVu_Sans'] text-[11px] leading-[14px] text-black">
            <div className="flex min-h-0 flex-1">
              <Page />
              <VerticalScroll />
            </div>
            <HorizontalScroll />
          </div>
        </div>
      </div>
      <div className="flex h-[3px] shrink-0 bg-[#3a81e6]">
        <div className="w-[94px] bg-[#4a9a45]" />
      </div>
    </div>
  );
}
